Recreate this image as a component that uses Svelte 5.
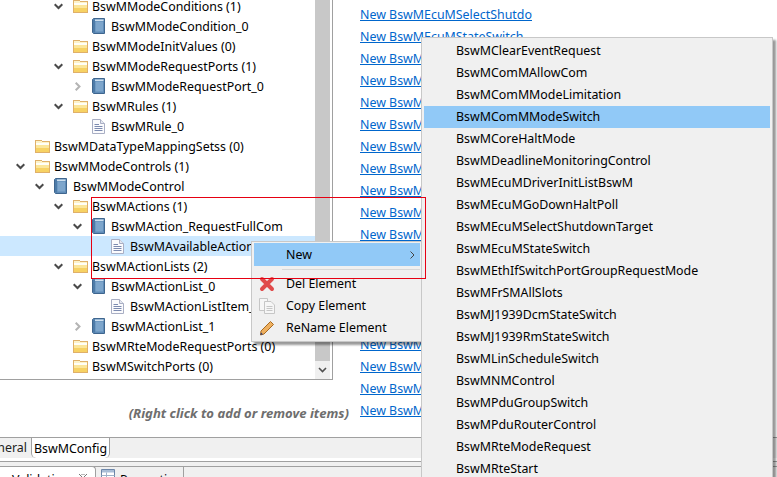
<script>
	const rows = [
		{ text: 'BswMModeConditions (1)', indent: 2, icon: 'folder', arrow: 'open' },
		{ text: 'BswMModeCondition_0', indent: 3, icon: 'book' },
		{ text: 'BswMModeInitValues (0)', indent: 2, icon: 'folder' },
		{ text: 'BswMModeRequestPorts (1)', indent: 2, icon: 'folder', arrow: 'open' },
		{ text: 'BswMModeRequestPort_0', indent: 3, icon: 'book', arrow: 'closed' },
		{ text: 'BswMRules (1)', indent: 2, icon: 'folder', arrow: 'open' },
		{ text: 'BswMRule_0', indent: 3, icon: 'doc' },
		{ text: 'BswMDataTypeMappingSetss (0)', indent: 0, icon: 'folder' },
		{ text: 'BswMModeControls (1)', indent: 0, icon: 'folder', arrow: 'open' },
		{ text: 'BswMModeControl', indent: 1, icon: 'book', arrow: 'open' },
		{ text: 'BswMActions (1)', indent: 2, icon: 'folder', arrow: 'open' },
		{ text: 'BswMAction_RequestFullCom', indent: 3, icon: 'book', arrow: 'open' },
		{ text: 'BswMAvailableActions_0', indent: 4, icon: 'doc', selected: true },
		{ text: 'BswMActionLists (2)', indent: 2, icon: 'folder', arrow: 'open' },
		{ text: 'BswMActionList_0', indent: 3, icon: 'book', arrow: 'open' },
		{ text: 'BswMActionListItem_0', indent: 4, icon: 'doc' },
		{ text: 'BswMActionList_1', indent: 3, icon: 'book', arrow: 'closed' },
		{ text: 'BswMRteModeRequestPorts (0)', indent: 2, icon: 'folder' },
		{ text: 'BswMSwitchPorts (0)', indent: 2, icon: 'folder' }
	];

	const actions = [
		'BswMClearEventRequest',
		'BswMComMAllowCom',
		'BswMComMModeLimitation',
		'BswMComMModeSwitch',
		'BswMCoreHaltMode',
		'BswMDeadlineMonitoringControl',
		'BswMEcuMDriverInitListBswM',
		'BswMEcuMGoDownHaltPoll',
		'BswMEcuMSelectShutdownTarget',
		'BswMEcuMStateSwitch',
		'BswMEthIfSwitchPortGroupRequestMode',
		'BswMFrSMAllSlots',
		'BswMJ1939DcmStateSwitch',
		'BswMJ1939RmStateSwitch',
		'BswMLinScheduleSwitch',
		'BswMNMControl',
		'BswMPduGroupSwitch',
		'BswMPduRouterControl',
		'BswMRteModeRequest',
		'BswMRteStart'
	];

	// the link column starts at SelectShutdownTarget and runs on behind the menu
	const links = [...actions.slice(8), 'BswMSchMSwitch', 'BswMSdClientServiceModeRequest', 'BswMSdConsumedEventGroup', 'BswMSdEventHandlerModeRequest', 'BswMSwitchPort', 'BswMTimerControl', 'BswMTriggerIPduSend'];
</script>

{#snippet folder()}
	<svg width="15" height="13" viewBox="0 0 15 13" shape-rendering="crispEdges">
		<path d="M0.5 0.5 H6.5 L7.5 1.5 H14.5 V12.5 H0.5 Z" fill="#fdf3c8" stroke="#dfb06a" />
		<path d="M1 3 H14 V4.5 H1 Z" fill="#fffef6" />
		<path d="M1 5 H14 V8 H1 Z" fill="#fbe69a" />
		<path d="M1 8 H14 V12 H1 Z" fill="#f7d263" />
	</svg>
{/snippet}

{#snippet book()}
	<svg width="13" height="16" viewBox="0 0 13 16">
		<path d="M0.5 1.5 L1.5 0.5 H12.5 V15.5 H1.5 L0.5 14.5 Z" fill="#5f8cb8" stroke="#3f668f" />
		<path d="M3.5 3.5 H11 V13.5 H3.5 Z" fill="#7ea6cc" />
		<path d="M3 1.5 H11.5 V3 H3 Z" fill="#cfe0ef" />
		<path d="M1.5 1.5 H2.5 V14.5 H1.5 Z" fill="#3c6a98" />
	</svg>
{/snippet}

{#snippet doc()}
	<svg width="13" height="15" viewBox="0 0 13 15">
		<path d="M0.5 0.5 H8.5 L12.5 4.5 V14.5 H0.5 Z" fill="#fbfbfd" stroke="#a9afc4" />
		<path d="M8.5 0.5 V4.5 H12.5" fill="#e4e7f0" stroke="#a9afc4" />
		<path d="M2.5 5.5 H7 M2.5 7.5 H10.5 M2.5 9.5 H10.5 M2.5 11.5 H10.5" stroke="#7c8bb0" />
	</svg>
{/snippet}

{#snippet chevron(open)}
	<svg width="9" height="9" viewBox="0 0 9 9" fill="none" stroke={open ? '#4a4a4a' : '#b4b4b4'} stroke-width="2">
		{#if open}
			<path d="M0.7 2.2 L4.5 6 L8.3 2.2" />
		{:else}
			<path d="M2.7 0.7 L6.5 4.5 L2.7 8.3" />
		{/if}
	</svg>
{/snippet}

<div class="page">
	<div class="editor">
		<div class="master">
			<div class="tree">
				<div class="rows">
					{#each rows as row}
						<div class="row" class:selected={row.selected} style="padding-left: {13 + row.indent * 19}px">
							<span class="twist">
								{#if row.arrow}{@render chevron(row.arrow === 'open')}{/if}
							</span>
							<span class="icon">
								{#if row.icon === 'folder'}
									{@render folder()}
								{:else if row.icon === 'book'}
									{@render book()}
								{:else}
									{@render doc()}
								{/if}
							</span>
							<span class="label">{row.text}</span>
						</div>
					{/each}
				</div>
				<div class="scrollbar">
					<div class="thumb"></div>
					<div class="down">
						<svg width="9" height="6" viewBox="0 0 9 6" fill="none" stroke="#505050" stroke-width="1.6"><path d="M1 1 L4.5 4.5 L8 1" /></svg>
					</div>
				</div>
			</div>
			<p class="hint">(Right click to add or remove items)</p>
		</div>
		<div class="links">
			{#each links as link}
				<a href="#top">New {link}</a>
			{/each}
		</div>
	</div>

	<div class="tabs">
		<div class="tab">General</div>
		<div class="tab current">BswMConfig</div>
	</div>

	<div class="views">
		<div class="viewbar">
			<div class="view active">
				<span>Validation</span>
				<svg width="10" height="8" viewBox="0 0 10 8" fill="none" stroke="#777"><path d="M1 0 L9 8 M9 0 L1 8 M3 0 L7 0 M3 8 L7 8" /></svg>
			</div>
			<div class="view">
				<svg width="14" height="13" viewBox="0 0 14 13"><path d="M0.5 0.5 H13.5 V12.5 H0.5 Z" fill="#fff" stroke="#6b85a8" /><path d="M1 1 H13 V3.5 H1 Z" fill="#a9bdd6" /><path d="M0.5 6.5 H13.5 M0.5 9.5 H13.5 M5.5 3.5 V12.5" stroke="#9fb2c9" /></svg>
				<span>Properties</span>
			</div>
		</div>
	</div>

	<div class="menu context">
		<div class="item hot">
			<span>New</span>
			<svg class="more" width="5" height="8" viewBox="0 0 5 8" fill="none" stroke="#444"><path d="M0.5 0.5 L4 4 L0.5 7.5" /></svg>
		</div>
		<div class="sep"></div>
		<div class="item">
			<svg class="glyph" width="16" height="16" viewBox="0 0 16 16"><path d="M3 3 L13 13 M13 3 L3 13" stroke="#e04b4b" stroke-width="4" stroke-linecap="round" /></svg>
			<span>Del Element</span>
		</div>
		<div class="item">
			<svg class="glyph" width="16" height="16" viewBox="0 0 16 16" fill="#f6f6f6" stroke="#c6c6c6"><path d="M0.5 0.5 H8.5 V12.5 H0.5 Z" /><path d="M5.5 3.5 H12 L15.5 7 V15.5 H5.5 Z" /><path d="M7.5 8.5 H13.5 M7.5 10.5 H13.5 M7.5 12.5 H13.5" /></svg>
			<span>Copy Element</span>
		</div>
		<div class="item">
			<svg class="glyph" width="16" height="16" viewBox="0 0 16 16"><path d="M11.5 1.5 L14.5 4.5 L5 14 L1.5 15 L2 11 Z" fill="#eeb060" stroke="#a86a20" /><path d="M1.5 15 L2 12.5 L4 14.2 Z" fill="#2b3f80" /></svg>
			<span>ReName Element</span>
		</div>
	</div>

	<div class="menu submenu">
		{#each actions as action}
			<div class="item" class:hot={action === 'BswMComMModeSwitch'}>{action}</div>
		{/each}
	</div>

	<div class="callout"></div>
</div>

<style>
	:global(body) {
		background: #fff;
	}
	.page {
		position: relative;
		width: 777px;
		height: 477px;
		overflow: hidden;
		display: flex;
		flex-direction: column;
		font-family: 'Noto Sans', sans-serif;
		font-size: 12.4px;
		color: #000;
	}
	.editor {
		display: flex;
		height: 437px;
	}
	.master {
		width: 360px;
		flex: none;
	}
	.tree {
		width: 332px;
		height: 379px;
		display: flex;
		border-right: 1px solid #a0a0a0;
		border-bottom: 1px solid #a0a0a0;
		overflow: hidden;
	}
	.rows {
		flex: 1;
		min-width: 0;
		margin-top: -4px;
	}
	.row {
		height: 20px;
		display: flex;
		align-items: center;
		white-space: nowrap;
	}
	.row.selected {
		background: #cce8ff;
	}
	.twist {
		width: 21px;
		flex: none;
		display: flex;
		align-items: center;
		padding-left: 3px;
		box-sizing: border-box;
	}
	.icon {
		width: 20px;
		flex: none;
		display: flex;
		align-items: center;
		padding-left: 1px;
		box-sizing: border-box;
	}
	.scrollbar {
		width: 15px;
		flex: none;
		margin-right: 2px;
		background: #f0f0f0;
		display: flex;
		flex-direction: column;
	}
	.thumb {
		height: 361px;
		background: #c8c8c8;
	}
	.down {
		flex: 1;
		display: flex;
		align-items: center;
		justify-content: center;
	}
	.hint {
		margin: 0;
		height: 57px;
		line-height: 66px;
		padding-right: 11px;
		text-align: right;
		font-weight: bold;
		font-style: italic;
		font-size: 13.1px;
		color: #6e6e6e;
		white-space: nowrap;
	}
	.links {
		width: 172px;
		padding-top: 4px;
		display: flex;
		flex-direction: column;
		overflow: hidden;
	}
	.links a {
		height: 22px;
		line-height: 22px;
		color: #0066cc;
		white-space: nowrap;
	}
	.tabs {
		height: 21px;
		flex: none;
		display: flex;
		background: #f0f0f0;
		border-top: 1px solid #a0a0a0;
		box-sizing: border-box;
		margin-left: -35px;
	}
	.tab {
		width: 66px;
		padding-right: 4px;
		box-sizing: border-box;
		line-height: 20px;
		text-align: right;
		color: #222;
	}
	.tab.current {
		width: 79px;
		padding-right: 0;
		margin-top: -1px;
		text-align: center;
		background: #fff;
		color: #000;
		border: 1px solid #a0a0a0;
		border-bottom: 0;
		border-radius: 0 0 5px 5px;
		line-height: 21px;
	}
	.views {
		margin-top: 3px;
		height: 16px;
		flex: none;
		box-sizing: border-box;
		padding-top: 4px;
		background: #f0f0f0;
		border-top: 1px solid #a0a0a0;
	}
	.viewbar {
		height: 11px;
		display: flex;
		border-top: 1px solid #a0a0a0;
	}
	.view {
		height: 10px;
		box-sizing: border-box;
		display: flex;
		align-items: flex-start;
		line-height: 18px;
		border-right: 1px solid #a0a0a0;
	}
	.view span {
		height: 18px;
	}
	.view.active {
		width: 96px;
		padding: 4px 7px 0 12px;
		margin-top: -1px;
		height: 11px;
		justify-content: space-between;
		background: #fff;
		border-top: 1px solid #a0a0a0;
		border-radius: 0 4px 0 0;
	}
	.view.active svg {
		margin-top: 3px;
	}
	.view:not(.active) {
		width: 88px;
		padding: 2px 0 0 5px;
		gap: 5px;
	}
	.view:not(.active) span {
		margin-top: 2px;
	}
	.menu {
		position: absolute;
		box-sizing: border-box;
		background: #f0f0f0;
		border: 1px solid #c8c8c8;
		box-shadow: 3px 3px 2px rgba(0, 0, 0, 0.4);
	}
	.menu .item {
		height: 22px;
		box-sizing: border-box;
		padding-bottom: 1px;
		display: flex;
		align-items: center;
		white-space: nowrap;
	}
	.menu .hot {
		background: #91c9f7;
	}
	.context {
		left: 251px;
		top: 241px;
		width: 172px;
		height: 101px;
		padding: 1px 2px;
		z-index: 1;
	}
	.context .item {
		position: relative;
		padding-left: 32px;
	}
	.context .item.hot {
		height: 23px;
	}
	.context .sep {
		height: 1px;
		margin: 3px 0 3px 28px;
		background: #d7d7d7;
	}
	.glyph {
		position: absolute;
		left: 5px;
		top: 3px;
	}
	.more {
		position: absolute;
		right: 5px;
		top: 8px;
	}
	.submenu {
		left: 421px;
		top: 37px;
		width: 352px;
		height: 450px;
		padding: 2px;
		z-index: 2;
	}
	.submenu .item {
		padding-left: 32px;
	}
	.callout {
		position: absolute;
		left: 91px;
		top: 197px;
		width: 335px;
		height: 82px;
		box-sizing: border-box;
		border: 1px solid #e60012;
		z-index: 3;
	}
</style>
